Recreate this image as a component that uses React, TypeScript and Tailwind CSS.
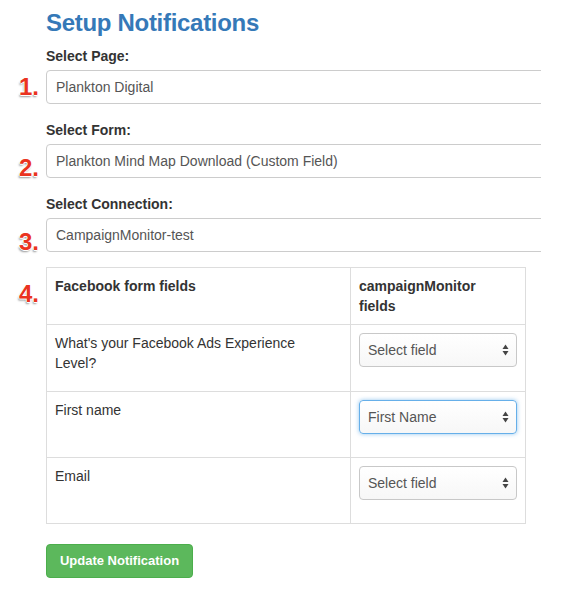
import React from 'react';

const numClass =
  "h-[34px] w-[46px] shrink-0 pr-[7px] text-right text-[24px] leading-[24px] font-bold text-[#ea3320] [text-shadow:-1px_0_#fff,1px_0_#fff,0_-1px_#fff,0_1px_#fff,-1px_2px_2px_rgba(0,0,0,0.4)]";

function Arrows() {
  return (
    <svg width="7" height="12" viewBox="0 0 7 12" className="shrink-0">
      <path d="M3.5 0.5 L6.5 5 L0.5 5 Z" fill="#444" />
      <path d="M3.5 11.5 L6.5 7 L0.5 7 Z" fill="#444" />
    </svg>
  );
}

function FieldSelect({ value, focused }: { value: string; focused?: boolean }) {
  return (
    <div
      className={
        'flex h-[34px] w-full items-center justify-between rounded-[4px] border bg-gradient-to-b from-white to-[#f7f7f7] pl-[8px] pr-[7px] text-[14px] text-[#555] ' +
        (focused
          ? 'border-[#66afe9] shadow-[0_0_4px_rgba(102,175,233,0.7)]'
          : 'border-[#c8c8c8]')
      }
    >
      <span>{value}</span>
      <Arrows />
    </div>
  );
}

function Group({
  num,
  label,
  value,
  numTop,
  last,
}: {
  num: string;
  label: string;
  value: string;
  numTop: string;
  last?: boolean;
}) {
  return (
    <div className={last ? 'mb-[15px]' : 'mb-[16px]'}>
      <div className="ml-[46px] mb-[4px] h-[20px] text-[14px] leading-[20px] font-bold text-[#333]">{label}</div>
      <div className="flex h-[34px]">
        <div className={numClass + ' ' + numTop}>{num}</div>
        <div className="flex h-[34px] w-[520px] shrink-0 items-center rounded-[4px] border border-[#ccc] bg-white pl-[9px] text-[14px] text-[#555]">
          {value}
        </div>
      </div>
    </div>
  );
}

export default function App() {
  const rows = [
    { label: "What's your Facebook Ads Experience Level?", value: 'Select field', pad: 'pb-[9px]' },
    { label: 'First name', value: 'First Name', focused: true, pad: 'pb-[8px]' },
    { label: 'Email', value: 'Select field', pad: 'pb-[8px]' },
  ];

  return (
    <div className="h-[600px] w-[571px] bg-white font-['Liberation_Sans',Arial,sans-serif]">
      <div className="w-[541px] overflow-hidden">
        <h2 className="ml-[46px] pt-[9px] h-[36px] text-[24px] leading-[27px] font-bold tracking-[-0.3px] text-[#3579b8]">
          Setup Notifications
        </h2>
        <div className="mt-[10px]">
          <Group num="1." label="Select Page:" value="Plankton Digital" numTop="pt-[5px]" />
          <Group num="2." label="Select Form:" value="Plankton Mind Map Download (Custom Field)" numTop="pt-[12px]" />
          <Group num="3." label="Select Connection:" value="CampaignMonitor-test" numTop="pt-[12px]" last />
        </div>

        <div className="flex">
          <div className={numClass + ' pt-[15px]'}>4.</div>
          <table className="w-[480px] shrink-0 border-collapse text-[14px] leading-[20px] text-[#333]">
            <thead>
              <tr>
                <th className="w-[304px] border border-[#ddd] p-[8px] text-left align-top font-bold">Facebook form fields</th>
                <th className="border border-[#ddd] p-[8px] text-left align-top font-bold">
                  campaignMonitor
                  <br />
                  fields
                </th>
              </tr>
            </thead>
            <tbody>
              {rows.map((r) => (
                <tr key={r.label}>
                  <td className={'border border-[#ddd] p-[8px] pr-[30px] align-top ' + r.pad}>{r.label}</td>
                  <td className={'border border-[#ddd] p-[8px] align-top ' + r.pad}>
                    <div className="mb-[15px]">
                      <FieldSelect value={r.value} focused={r.focused} />
                    </div>
                  </td>
                </tr>
              ))}
            </tbody>
          </table>
        </div>

        <div className="ml-[46px] mt-[20px]">
          <button className="h-[34px] w-[147px] rounded-[4px] border border-[#4cae4c] bg-[#5cb85c] text-[13px] font-bold text-white">
            Update Notification
          </button>
        </div>
      </div>
    </div>
  );
}
